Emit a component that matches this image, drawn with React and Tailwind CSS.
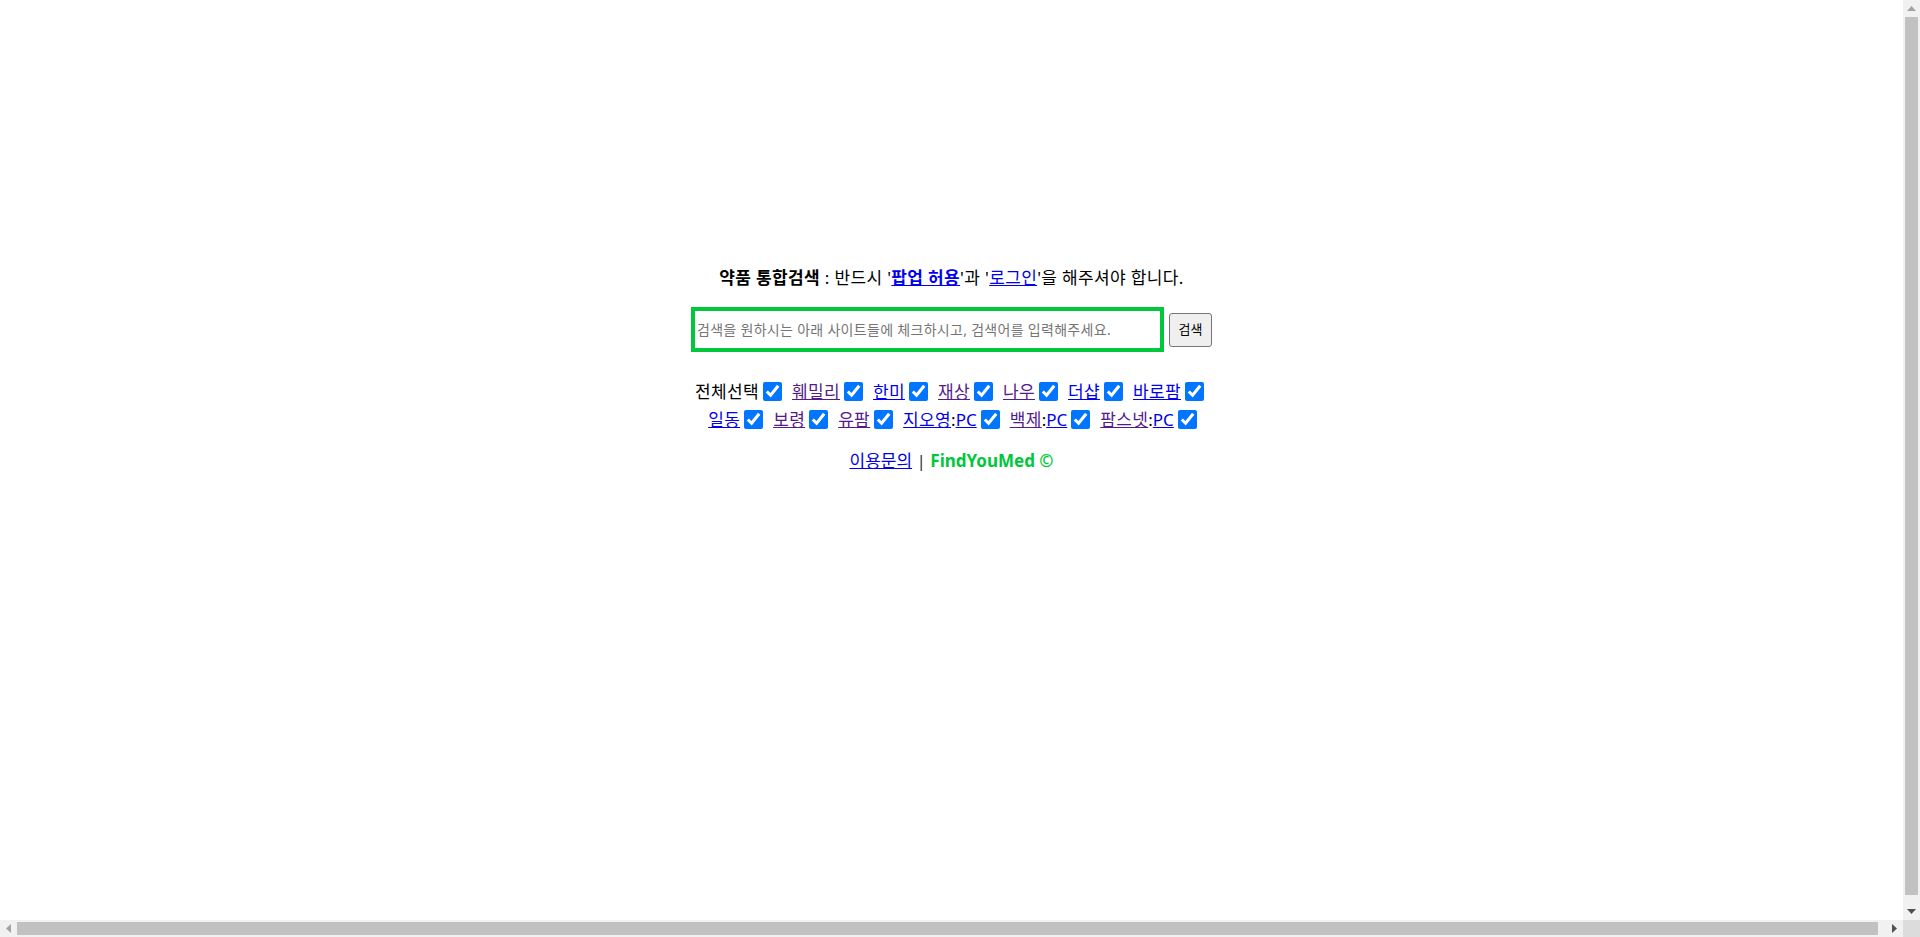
import React from 'react';

const sites1 = [
  { name: '훼밀리', visited: true },
  { name: '한미', visited: false },
  { name: '재상', visited: true },
  { name: '나우', visited: true },
  { name: '더샵', visited: false },
  { name: '바로팜', visited: false },
];

const sites2 = [
  { name: '일동', visited: false },
  { name: '보령', visited: true },
  { name: '유팜', visited: true },
  { name: '지오영', visited: false, pc: true },
  { name: '백제', visited: true, pc: true },
  { name: '팜스넷', visited: true, pc: true },
];

const Check = () => (
  <input
    type="checkbox"
    defaultChecked
    className="w-[19px] h-[19px] align-[-3px] ml-[4px] mr-[4px] accent-[#0075ff]"
  />
);

const SiteItem = ({ site }) => (
  <span className="ml-[6px]">
    <a href="#" className={'underline ' + (site.visited ? 'text-[#551a8b]' : 'text-[#0000ee]')}>
      {site.name}
    </a>
    {site.pc && (
      <span className="tracking-normal">
        :<a href="#" className="underline text-[#0000ee]">PC</a>
      </span>
    )}
    <Check />
  </span>
);

// fake browser scrollbars seen in the screenshot
const Scrollbars = () => (
  <>
    <div className="fixed top-0 right-0 w-[17px] h-[920px] bg-[#f1f1f1] flex flex-col items-center">
      <div className="h-[17px] flex items-center justify-center">
        <svg width="9" height="5" viewBox="0 0 9 5"><path d="M0 5 L4.5 0 L9 5 Z" fill="#a3a3a3" /></svg>
      </div>
      <div className="flex-1 w-[13px] bg-[#c1c1c1] mb-[8px]" />
      <div className="h-[17px] flex items-center justify-center">
        <svg width="9" height="5" viewBox="0 0 9 5"><path d="M0 0 L4.5 5 L9 0 Z" fill="#505050" /></svg>
      </div>
    </div>
    <div className="fixed bottom-0 left-0 w-[1903px] h-[17px] bg-[#f1f1f1] flex items-center">
      <div className="w-[17px] flex items-center justify-center">
        <svg width="5" height="9" viewBox="0 0 5 9"><path d="M5 0 L0 4.5 L5 9 Z" fill="#a3a3a3" /></svg>
      </div>
      <div className="flex-1 h-[13px] bg-[#c1c1c1] mr-[8px]" />
      <div className="w-[17px] flex items-center justify-center">
        <svg width="5" height="9" viewBox="0 0 5 9"><path d="M0 0 L5 4.5 L0 9 Z" fill="#505050" /></svg>
      </div>
    </div>
    <div className="fixed bottom-0 right-0 w-[17px] h-[17px] bg-[#dcdcdc]" />
  </>
);

const App = () => {
  return (
    <div
      className="min-h-[937px] bg-white text-black text-[17px] tracking-[0.35px]"
      style={{ fontFamily: '"Noto Sans", "Noto Sans CJK KR", sans-serif' }}
    >
      <div className="w-[1903px] pt-[265px] flex flex-col items-center">
        <p className="leading-[26px]">
          <b>약품 통합검색</b> : 반드시 '
          <a href="#" className="underline text-[#0000ee] font-bold">팝업 허용</a>'과 '
          <a href="#" className="underline text-[#0000ee]">로그인</a>'을 해주셔야 합니다.
        </p>

        <div className="mt-[16px] flex items-center gap-[5px] tracking-normal">
          <input
            type="text"
            placeholder="검색을 원하시는 아래 사이트들에 체크하시고, 검색어를 입력해주세요."
            className="w-[473px] h-[45px] border-[4px] border-[#00c73c] px-[2px] text-[14px] tracking-[0.3px] outline-none placeholder:text-[#757575]"
          />
          <button className="w-[43px] h-[34px] bg-[#efefef] border border-[#767676] rounded-[3px] text-[13px] text-black">
            검색
          </button>
        </div>

        <div className="mt-[26px] text-center leading-[28px]">
          <div>
            전체선택
            <Check />
            {sites1.map((s) => (
              <SiteItem key={s.name} site={s} />
            ))}
          </div>
          <div>
            {sites2.map((s) => (
              <SiteItem key={s.name} site={s} />
            ))}
          </div>
        </div>

        <p className="mt-[14px] leading-[26px] tracking-normal">
          <a href="#" className="underline text-[#0000ee]">이용문의</a>
          <span className="text-[#333]"> | </span>
          <b className="text-[#00c73c]">FindYouMed ©</b>
        </p>
      </div>
      <Scrollbars />
    </div>
  );
};

export default App;
